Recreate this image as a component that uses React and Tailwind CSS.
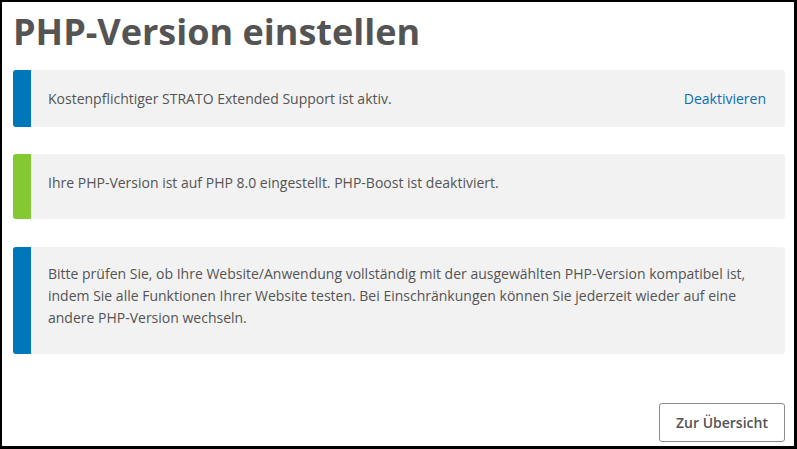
import React from 'react';

const font = { fontFamily: '"Open Sans", "Liberation Sans", sans-serif' };

const Notice = ({ bar, className = '', children }) => (
  <div className={`flex rounded-[3px] bg-[#f2f2f2] overflow-hidden ${className}`}>
    <div className={`w-[18px] shrink-0 ${bar}`}></div>
    <div className="flex-1 pl-[17px] pr-[19px] text-[14px] leading-[22px] text-[#545454]">{children}</div>
  </div>
);

export default function App() {
  return (
    <div
      className="w-[797px] h-[449px] bg-white border-black border-l-2 border-t-2 border-r-[3px] border-b-[3px] pl-[11px] pr-[9px] flex flex-col"
      style={font}
    >
      <h1 className="mt-[8px] text-[36px] leading-[44px] font-bold text-[#545454]">PHP-Version einstellen</h1>

      <Notice bar="bg-[#0077bb]" className="mt-[16px] h-[57px]">
        <div className="h-full flex items-center justify-between">
          <span>Kostenpflichtiger STRATO Extended Support ist aktiv.</span>
          <a href="#" className="text-[#0b6db5]">Deaktivieren</a>
        </div>
      </Notice>

      <Notice bar="bg-[#84c932]" className="mt-[27px] h-[65px]">
        <p className="pt-[18px]">Ihre PHP-Version ist auf PHP 8.0 eingestellt. PHP-Boost ist deaktiviert.</p>
      </Notice>

      <Notice bar="bg-[#0077bb]" className="mt-[28px] h-[107px]">
        <p className="pt-[16px]">
          Bitte prüfen Sie, ob Ihre Website/Anwendung vollständig mit der ausgewählten PHP-Version kompatibel ist,
          indem Sie alle Funktionen Ihrer Website testen. Bei Einschränkungen können Sie jederzeit wieder auf eine
          andere PHP-Version wechseln.
        </p>
      </Notice>

      <div className="mt-[49px] flex justify-end">
        <button className="w-[126px] h-[39px] rounded-[3px] border border-[#8c8c8c] bg-white text-[14px] font-semibold text-[#545454]">
          Zur Übersicht
        </button>
      </div>
    </div>
  );
}
